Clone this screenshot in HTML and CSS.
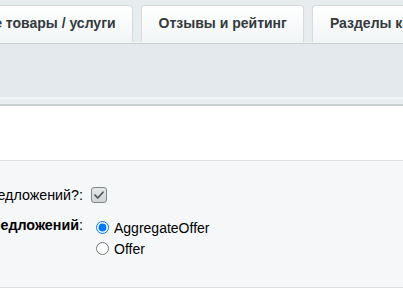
FILE: index.html
```html
<!DOCTYPE html>
<html lang="ru">
<head>
<meta charset="utf-8">
<link rel="stylesheet" href="styles.css">
</head>
<body>
<div class="page">
  <div class="tabs">
    <div class="tab tab-first">Связанные товары / услуги</div>
    <div class="tab">Отзывы и рейтинг</div>
    <div class="tab">Разделы каталога</div>
  </div>
  <div class="toolbar"></div>
  <div class="strip"></div>
  <div class="blank"></div>
  <div class="panel">
    <div class="form">
      <div class="label">Использовать агрегацию предложений?:</div>
      <div class="field">
        <span class="check">
          <svg width="16" height="16" viewBox="0 0 16 16"><path d="M4 8.2 L6.8 11 L12 5.2" fill="none" stroke="#4f5457" stroke-width="1.7" stroke-linecap="round" stroke-linejoin="round"/></svg>
        </span>
      </div>
      <div class="label label-type"><b>Тип предложений</b>:</div>
      <div class="field options">
        <label class="opt"><input type="radio" name="offer" checked>AggregateOffer</label>
        <label class="opt"><input type="radio" name="offer">Offer</label>
      </div>
    </div>
  </div>
  <div class="after"></div>
</div>
</body>
</html>
```
FILE: styles.css
```css
html, body {
  margin: 0;
  padding: 0;
  background: #ffffff;
  overflow: hidden;
}
.page {
  width: 403px;
  height: 294px;
  overflow: hidden;
  font-family: "Liberation Sans", Arial, sans-serif;
}
.tabs {
  display: flex;
  gap: 8px;
  padding-top: 5px;
  margin-left: -94px;
  background: #e7ecee;
  height: 37px;
  white-space: nowrap;
  border-bottom: 1px solid #f4f6f7;
}
.tab {
  flex: none;
  box-sizing: border-box;
  height: 37px;
  padding: 0 16px 0 17px;
  line-height: 34px;
  font-size: 14px;
  font-weight: bold;
  color: #333a3e;
  background: linear-gradient(#ffffff, #f2f5f6);
  border: 1px solid #d5dcdf;
  border-bottom: none;
  border-radius: 4px 4px 0 0;
  box-shadow: 0 0 1px rgba(0,0,0,0.05);
}
.toolbar {
  height: 53px;
  background: #e3e9ec;
  border-top: 1px solid #c7cfd3;
}
.strip {
  height: 5px;
  background: #e9eef0;
  border-top: 2px solid #f2f5f6;
  border-bottom: 2px solid #c9ced1;
}
.blank {
  height: 54px;
  background: #ffffff;
  border-bottom: 1px solid #dde2e4;
}
.panel {
  height: 127px;
  background: #f5f7f8;
  border-bottom: 1px solid #dadfe1;
  box-sizing: border-box;
  padding-top: 26px;
}
.form {
  display: grid;
  grid-template-columns: 300px 1fr;
  row-gap: 12px;
  margin-left: -209px;
  font-size: 14.3px;
  color: #000;
}
.label {
  text-align: right;
  padding-right: 8px;
  white-space: nowrap;
  line-height: 16px;
}
.field {
  line-height: 16px;
}
.check {
  display: inline-block;
  box-sizing: border-box;
  width: 16px;
  height: 16px;
  border: 1px solid #80878a;
  border-radius: 3px;
  background: linear-gradient(#e6e8e9, #cfd3d5);
  vertical-align: top;
}
.check svg {
  display: block;
  margin: -1px;
}
.label-type {
  line-height: 21px;
}
.options {
  padding-top: 3px;
  line-height: 21px;
  font-size: 14px;
}
.opt {
  display: block;
}
.opt input {
  margin: 0 5px 0 5px;
  width: 13px;
  height: 13px;
  vertical-align: -1px;
}
.after {
  height: 10px;
  background: #ffffff;
}
```
